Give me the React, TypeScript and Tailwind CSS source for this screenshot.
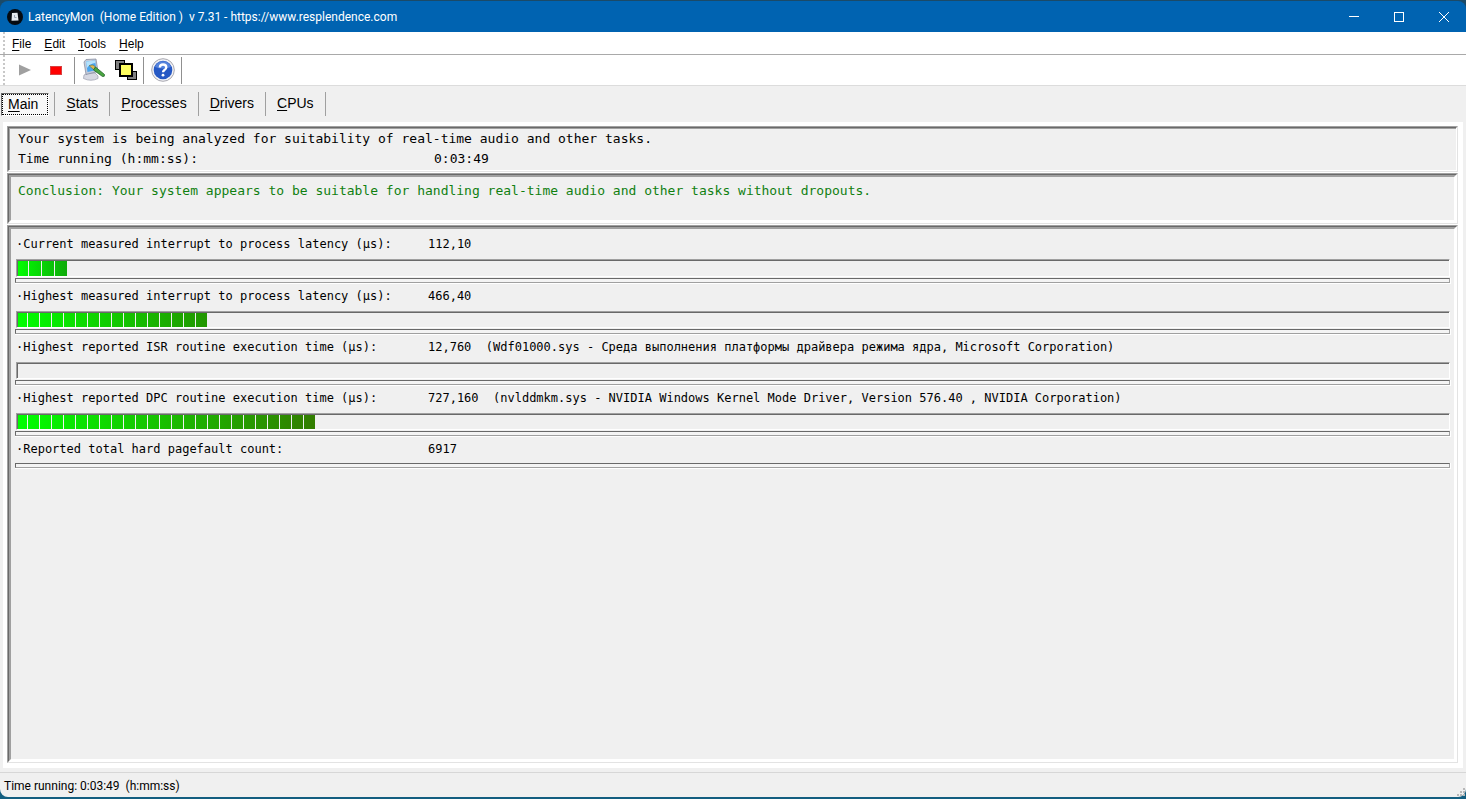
import { useState } from 'react'
import type { ReactNode } from 'react'

const menus = ['File', 'Edit', 'Tools', 'Help']
const tabs = ['Main', 'Stats', 'Processes', 'Drivers', 'CPUs']

type Measurement = {
  label: string
  value: string
  detail?: string
  blocks?: number
  blockWidth?: number
  end?: [number, number, number]
}

const measurements: Measurement[] = [
  { label: '·Current measured interrupt to process latency (µs):', value: '112,10', blocks: 4, blockWidth: 13, end: [15, 170, 10] },
  { label: '·Highest measured interrupt to process latency (µs):', value: '466,40', blocks: 16, end: [34, 150, 0] },
  {
    label: '·Highest reported ISR routine execution time (µs):',
    value: '12,760',
    detail: '(Wdf01000.sys - Среда выполнения платформы драйвера режима ядра, Microsoft Corporation)',
    blocks: 0,
  },
  {
    label: '·Highest reported DPC routine execution time (µs):',
    value: '727,160',
    detail: '(nvlddmkm.sys - NVIDIA Windows Kernel Mode Driver, Version 576.40 , NVIDIA Corporation)',
    blocks: 25,
    end: [50, 125, 0],
  },
  { label: '·Reported total hard pagefault count:', value: '6917' },
]

// first letter is the keyboard shortcut
function Mnemonic({ text }: { text: string }) {
  return (
    <>
      <span className="underline underline-offset-2">{text[0]}</span>
      {text.slice(1)}
    </>
  )
}

function TitleBar() {
  return (
    <header className="bg-[#1b4a68] pt-px">
      <div className="flex h-[31px] items-center rounded-t-lg bg-[#0063b1] pl-[7px] text-white">
        <svg width="16" height="16" viewBox="0 0 16 16" aria-hidden="true">
          <circle cx="8" cy="8" r="8" fill="#050a10" />
          <path d="M5 4 L10.500 3.800 L11.500 11.500 L4.500 11.800 Z" fill="#e4eaf0" />
          <path d="M7.500 6 V8.500 H9.500" stroke="#9ba6b4" fill="none" />
        </svg>
        <h1 className="ml-[5px] flex-1 whitespace-pre font-[Roboto,sans-serif] text-[12px]">
          {'LatencyMon  (Home Edition )  v 7.31 - https://www.resplendence.com'}
        </h1>
        <button aria-label="Minimize" className="flex h-full w-[45px] items-center justify-center">
          <svg width="10" height="10" stroke="white"><path d="M0 4.5 H10" /></svg>
        </button>
        <button aria-label="Maximize" className="flex h-full w-[45px] items-center justify-center">
          <svg width="10" height="10" stroke="white" fill="none"><rect x="0.5" y="0.5" width="9" height="9" /></svg>
        </button>
        <button aria-label="Close" className="flex h-full w-[45px] items-center justify-center">
          <svg width="10" height="10" stroke="white"><path d="M0 0 L10 10 M10 0 L0 10" /></svg>
        </button>
      </div>
    </header>
  )
}

function Grip() {
  return <div className="ml-[3px] self-stretch border-l-2 border-dotted border-[#c8c8c8]" />
}

function MenuBar() {
  return (
    <nav className="flex h-[23px] items-center border-b border-[#a9a9a9] bg-white text-[12px]">
      <Grip />
      <div className="ml-[7px] flex gap-[13px] pt-px">
        {menus.map((m) => (
          <button key={m}>
            <Mnemonic text={m} />
          </button>
        ))}
      </div>
    </nav>
  )
}

function ToolBar() {
  return (
    <div className="flex h-[31px] items-center border-b border-[#dcdcdc] bg-white">
      <Grip />
      <button aria-label="Start" className="ml-[13px]">
        <svg width="14" height="12"><path d="M1 0.5 L13 6 L1 11.5 Z" fill="#a0a0a0" /></svg>
      </button>
      <button aria-label="Stop" className="ml-[18px]">
        <svg width="12" height="9"><rect x="0.5" y="0.5" width="11" height="8" fill="#ff0000" stroke="#d84040" /></svg>
      </button>
      <div className="ml-3 h-[27px] w-px bg-[#909090]" />
      <button aria-label="Options" className="ml-[7px]">
        <svg width="24" height="24" viewBox="0 0 24 24">
          <path d="M2 17 L6 15 H13 L16 18 V20.500 Q9 24 1.500 20.500 Z" fill="#d6d8e2" stroke="#9a9cac" strokeWidth="0.7" />
          <path d="M2 4 L4 1.500 L14 1 L16 13.500 L4 16.500 Z" fill="#c3cad9" stroke="#7c8498" strokeWidth="0.7" />
          <path d="M4 3.500 L13 2.500 L14.500 12 L5.500 14 Z" fill="#4aa5ee" />
          <path d="M4 3.500 L13 2.500 L13.300 5 Q8 5.500 5 10 Z" fill="#b4e2fc" />
          <path d="M7 7.500 L11 7 L13.500 9 L11.500 11.500 Z" fill="#e0b850" stroke="#5f6b40" strokeWidth="0.5" />
          <path d="M13.500 9 L22.500 16.500 Q23 19 20.500 18.500 L11.500 12 Z" fill="#4aa640" stroke="#22662a" strokeWidth="0.8" />
        </svg>
      </button>
      <button aria-label="Windows" className="ml-2">
        <svg width="24" height="22" viewBox="0 0 24 22" stroke="#000">
          <rect x="1.500" y="1.500" width="9" height="9" fill="#808080" />
          <rect x="13.500" y="12.500" width="9" height="8" fill="#808080" />
          <rect x="6" y="5" width="12" height="12" fill="#ffff60" strokeWidth="2" />
        </svg>
      </button>
      <div className="ml-[5px] h-[27px] w-px bg-[#909090]" />
      <button aria-label="Help" className="ml-[7px]">
        <svg width="24" height="24" viewBox="0 0 24 24">
          <circle cx="12" cy="12" r="11.300" fill="#f2f2f5" stroke="#a8a8b0" />
          <circle cx="12" cy="12" r="9.300" fill="#2558c4" />
          <path d="M4 9 A8.500 8.500 0 0 1 20 9 Q12 12 4 9" fill="#5583dc" />
          <path d="M8.800 9.500 Q9 6.500 12 6.500 Q15.300 6.500 15.300 9.300 Q15.300 11 13.500 12 Q12 13 12 14.300" fill="none" stroke="#fff" strokeWidth="2.300" />
          <circle cx="12" cy="17.200" r="1.400" fill="#fff" />
        </svg>
      </button>
      <div className="ml-[6px] h-[27px] w-px bg-[#909090]" />
    </div>
  )
}

function Tabs() {
  const [active, setActive] = useState('Main')

  return (
    <div role="tablist" className="flex h-9 items-center pl-px text-[14px]">
      {tabs.map((t) => (
        <div key={t} className="flex items-center">
          <button
            role="tab"
            aria-selected={t === active}
            onClick={() => setActive(t)}
            className={
              t === active
                ? 'mr-[5px] h-[23px] border border-t-[#696969] border-l-[#696969] border-r-white border-b-white bg-[#f8f8f8]'
                : 'h-[23px] px-[11px] pb-[2px]'
            }
          >
            {t === active ? (
              <span className="flex h-full items-center border border-dotted border-black pr-[9px] pl-[5px]">
                <span><Mnemonic text={t} /></span>
              </span>
            ) : (
              <Mnemonic text={t} />
            )}
          </button>
          <div className="h-6 w-px bg-[#a0a0a0]" />
        </div>
      ))}
    </div>
  )
}

function Panel({ children, className = '', thin = false }: { children?: ReactNode; className?: string; thin?: boolean }) {
  return (
    <section className={'flex border border-t-[#a0a0a0] border-l-[#a0a0a0] border-r-[#e3e3e3] border-b-[#e3e3e3] ' + className}>
      <div className="flex flex-1 border border-t-[#696969] border-l-[#696969] border-r-white border-b-white">
        <div
          className={
            thin
              ? 'flex-1 border-t border-l border-[#a0a0a0]'
              : 'flex-1 border-2 border-t-[#a0a0a0] border-l-[#a0a0a0] border-r-white border-b-white'
          }
        >
          {children}
        </div>
      </div>
    </section>
  )
}

function Bar({ blocks, blockWidth = 12, end = [0, 255, 0] }: { blocks: number; blockWidth?: number; end?: number[] }) {
  return (
    <div
      className={
        'ml-px mr-px flex border border-t-[#a0a0a0] border-l-[#a0a0a0] border-r-white border-b-white ' +
        (blockWidth > 12 ? 'h-[18px]' : 'h-[17px]')
      }
    >
      <div className="flex flex-1 border-t border-l border-[#696969]">
        {Array.from({ length: blocks }, (_, i) => {
          const mix = (t: number) =>
            'rgb(' + [Math.round(end[0] * t), Math.round(255 + (end[1] - 255) * t), Math.round(end[2] * t)].join(',') + ')'
          return (
            <div
              key={i}
              className="mr-px"
              style={{
                width: (i === 0 ? blockWidth - 2 : blockWidth) - 1,
                background: `linear-gradient(to right, ${mix(i / blocks)}, ${mix((i + 1) / blocks)})`,
              }}
            />
          )
        })}
      </div>
    </div>
  )
}

function Row({ m }: { m: Measurement }) {
  const hasBar = m.blocks !== undefined
  return (
    <div>
      <div className={'flex items-center pl-px ' + (hasBar ? 'h-[27px] pb-1' : 'h-[26px] pb-[2px]')}>
        <span className="w-[412px] shrink-0">{m.label}</span>
        <span className="whitespace-pre">{m.value + (m.detail ? '  ' + m.detail : '')}</span>
      </div>
      {hasBar && <Bar blocks={m.blocks!} blockWidth={m.blockWidth} end={m.end} />}
      <div className={'flex h-[6px] border-r border-b border-white ' + (hasBar ? 'mt-px' : '')}>
        <div className="flex-1 border border-t-[#696969] border-l-[#696969] border-r-[#a0a0a0] border-b-[#a0a0a0] bg-[#f4f4f4]" />
      </div>
    </div>
  )
}

export default function App() {
  return (
    <div className="flex min-h-screen flex-col bg-[#f0f0f0] font-['Liberation_Sans',Arial,sans-serif] text-black">
      <TitleBar />
      <MenuBar />
      <ToolBar />
      <Tabs />
      <main className="mr-[3px] ml-[3px] flex flex-1 flex-col bg-white pt-1 pr-[5px] pb-[5px] pl-1 font-['DejaVu_Sans_Mono',monospace]">
        <div className="flex flex-1 flex-col gap-px *:bg-[#f0f0f0]">
          <Panel thin className="h-[46px]">
            <div className="pl-2 text-[13px] leading-[20px]">
              <p>Your system is being analyzed for suitability of real-time audio and other tasks.</p>
              <p className="flex">
                <span className="w-[416px]">Time running (h:mm:ss):</span>
                <span>0:03:49</span>
              </p>
            </div>
          </Panel>
          <Panel className="h-[51px]">
            <p className="pt-1 pl-[7px] text-[13px] leading-[20px] text-[#108010]">
              Conclusion: Your system appears to be suitable for handling real-time audio and other tasks without dropouts.
            </p>
          </Panel>
          <Panel className="flex-1">
            <div className="pt-[3px] pr-[3px] pl-1 text-[12px]">
              {measurements.map((m) => (
                <Row key={m.label} m={m} />
              ))}
            </div>
          </Panel>
        </div>
      </main>
      <div className="h-1" />
      <footer className="bg-[#135e80] pb-[2px]">
        <div className="flex h-[25px] items-center justify-between rounded-b-lg border-t border-[#d7d7d7] bg-[#f0f0f0] pl-1 font-[Roboto,sans-serif] text-[12px]">
          <span className="whitespace-pre pt-[2px]">{'Time running: 0:03:49  (h:mm:ss)'}</span>
          <svg width="9" height="9" className="self-end" fill="#b8b8b8" aria-hidden="true">
            <path d="M6 0h2v2h-2z M3 3h2v2h-2z M6 3h2v2h-2z M0 6h2v2h-2z M3 6h2v2h-2z M6 6h2v2h-2z" />
          </svg>
        </div>
      </footer>
    </div>
  )
}
